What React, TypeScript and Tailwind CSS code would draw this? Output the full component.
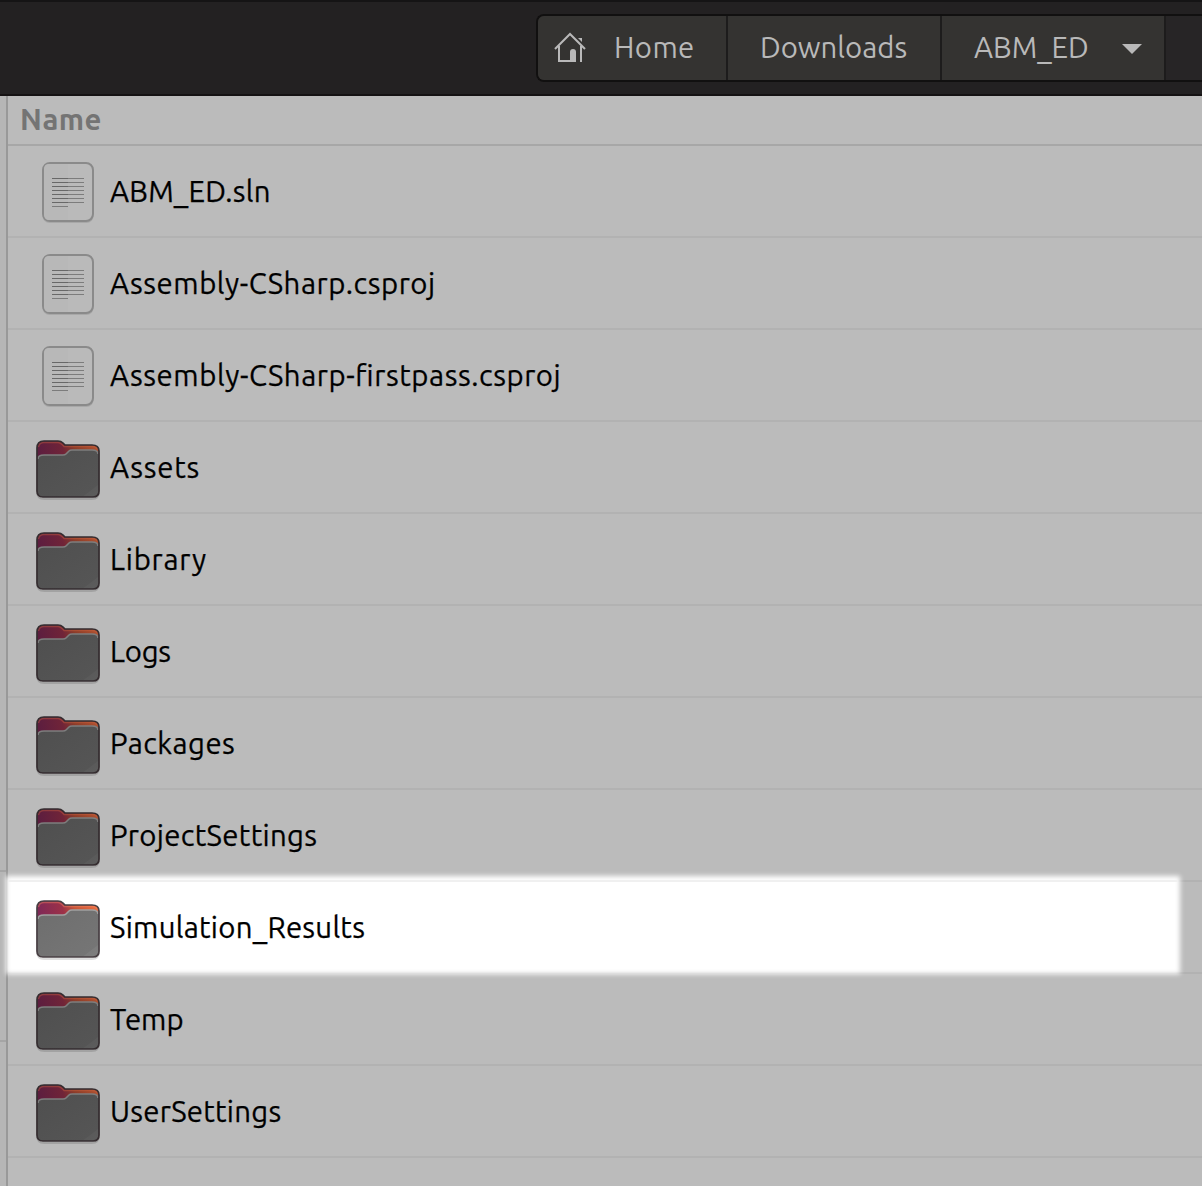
import React from "react";

type Entry = { name: string; kind: "file" | "folder"; fit: string; highlighted?: boolean };

const entries: Entry[] = [
  { name: "ABM_ED.sln", kind: "file", fit: "tracking-[0.22px]" },
  { name: "Assembly-CSharp.csproj", kind: "file", fit: "tracking-[0.55px]" },
  { name: "Assembly-CSharp-firstpass.csproj", kind: "file", fit: "tracking-[0.57px]" },
  { name: "Assets", kind: "folder", fit: "tracking-[0.8px]" },
  { name: "Library", kind: "folder", fit: "tracking-[0.8px]" },
  { name: "Logs", kind: "folder", fit: "tracking-[-0.2px]" },
  { name: "Packages", kind: "folder", fit: "tracking-[0.45px]" },
  { name: "ProjectSettings", kind: "folder", fit: "tracking-[0.33px]" },
  { name: "Simulation_Results", kind: "folder", fit: "tracking-[0.28px]", highlighted: true },
  { name: "Temp", kind: "folder", fit: "tracking-[0px]" },
  { name: "UserSettings", kind: "folder", fit: "tracking-[0.27px]" },
];

function FileIcon() {
  return (
    <svg width="64" height="64" viewBox="0 0 64 64" className="mt-[2px] shrink-0">
      <rect x="6.5" y="4" width="51" height="59" rx="7" fill="#a8a8a8" />
      <rect x="7" y="3" width="50" height="58" rx="7" fill="#bababa" stroke="#8a8a8a" strokeWidth="2" />
      <path d="M8 54V9q0-5 5-5h19v56H13q-5 0-5-6" fill="#b8b8b8" />
      {[18, 22, 26, 30, 34, 38, 42].map((y) => (
        <g key={y}>
          <rect x="16" y={y} width="16" height="1" fill="#686868" />
          <rect x="32" y={y} width="16" height="1" fill="#7c7c7c" />
        </g>
      ))}
      <rect x="16" y="46" width="16" height="1" fill="#7c7c7c" />
    </svg>
  );
}

function FolderIcon({ bright = false }: { bright?: boolean }) {
  const id = bright ? "bright" : "dim";
  return (
    <svg width="64" height="64" viewBox="0 0 64 64" className="mt-[6px] shrink-0">
      <defs>
        <linearGradient id={id + "-back"} gradientUnits="userSpaceOnUse" x1="0" x2="64" y1="16" y2="4">
          <stop offset="0" stopColor={bright ? "#7c2858" : "#5a1d40"} />
          <stop offset="0.42" stopColor={bright ? "#9c3148" : "#702438"} />
          <stop offset="0.6" stopColor={bright ? "#c85538" : "#8c3c29"} />
          <stop offset="1" stopColor={bright ? "#ee7040" : "#b45330"} />
        </linearGradient>
        <linearGradient id={id + "-front"} x1="0" x2="1" y1="0" y2="1">
          <stop offset="0" stopColor={bright ? "#6e6e6e" : "#4f4f4f"} />
          <stop offset="0.86" stopColor={bright ? "#757575" : "#555555"} />
          <stop offset="0.87" stopColor={bright ? "#7c7c7c" : "#5a5a5a"} />
          <stop offset="1" stopColor={bright ? "#7f7f7f" : "#5d5d5d"} />
        </linearGradient>
      </defs>
      <path d="M1 15v38q0 8 7 8h48q7 0 7-8V15" fill="none" stroke="#000" strokeOpacity=".13" strokeWidth="2" />
      <path d="M1 10Q1 3 8 3h14q3 0 5 2l2 2h27q7 0 7 6v40q0 6-6 6H7q-6 0-6-6Z" fill={"url(#" + id + "-back)"} />
      <path d="M2.500 9Q3 4.500 8 4.500h14q2 0 4 2l2 2h28q4.500 0 5.500 3" fill="none" stroke={bright ? "#ff8965" : "#d06540"} strokeOpacity=".4" strokeWidth="1.500" />
      <path d="M1 21q0-4 6-4h20q2 0 3-1l3-3q1-1 3-1h21q6 0 6 5v36q0 6-6 6H7q-6 0-6-6Z" fill={"url(#" + id + "-front)"} />
      <path d="M2 21q0-4 6-4h19q2 0 3-1l3-3q1-1 3-1h20q6 0 6 4" fill="none" stroke={bright ? "#a0a0a0" : "#7d7d7d"} strokeWidth="1.600" />
      <path d="M1 10Q1 3 8 3h14q3 0 5 2l2 2h27q7 0 7 6v40q0 6-6 6H7q-6 0-6-6Z" fill="none" stroke={bright ? "#483f43" : "#352d30"} strokeWidth="1.700" />
    </svg>
  );
}

function HomeIcon() {
  return (
    <svg width="32" height="32" viewBox="0 0 32 32" className="shrink-0" fill="none" stroke="#b9b9b9" strokeWidth="2">
      <path d="M1 17 16 2l15 15" />
      <path d="M5 14v15h17M27 14v16" />
      <path d="M16 30V20q0-3 3-3t3 3v10Z" fill="#b9b9b9" stroke="none" />
      <path d="M24 6h4v4Z" fill="#b9b9b9" stroke="none" />
    </svg>
  );
}

export default function App() {
  return (
    <div className="flex h-[1186px] w-[1202px] flex-col overflow-hidden bg-[#bbbbbb] font-['Ubuntu','Noto_Sans',sans-serif] text-[29.333px] leading-none [font-feature-settings:'liga'_1]">
      <header className="flex h-24 shrink-0 justify-end border-y-2 border-t-[#151415] border-b-[#151213] bg-[#232122] pt-3">
        <nav className="flex h-[68px] w-[666px] overflow-hidden rounded-l-lg border-y-2 border-l-2 border-[#111010] bg-[#272526] text-[#b9b9b9]">
          <div className="flex w-[190px] shrink-0 items-center border-r-2 border-[#1d1c1c] bg-[#343331] pl-4">
            <HomeIcon />
            <span className="ml-[28px] tracking-[0.4px]">Home</span>
          </div>
          <div className="flex w-[214px] shrink-0 items-center border-r-2 border-[#1d1c1c] bg-[#343331] pl-[32px]">
            <span>Downloads</span>
          </div>
          <div className="flex w-[224px] shrink-0 items-center justify-between border-r-2 border-[#1d1c1c] bg-[#343331] pr-[22px] pl-8">
            <span>ABM_ED</span>
            <svg width="20" height="10" viewBox="0 0 20 10" className="mt-[2px]"><path d="M0 0h20L10 10Z" fill="#b9b9b9" /></svg>
          </div>
        </nav>
      </header>
      <main className="flex min-h-0 grow">
        <aside className="flex w-2 shrink-0 flex-col border-r-2 border-[#999999] bg-[#b6b6b6]">
          <div className="h-[776px] border-b-2 border-[#a5a5a5]" />
          <div className="h-[170px] border-b-2 border-[#a5a5a5]" />
        </aside>
        <section className="flex grow flex-col">
          <div className="flex h-[50px] shrink-0 items-center border-b-2 border-[#a7a7a7] pl-3 font-bold text-[#747474]">
            <span className="tracking-[0.5px]">Name</span>
          </div>
          {entries.map((e) => (
            <div key={e.name} className="relative flex h-[92px] shrink-0 items-center border-b-2 border-[#b2b2b2] pl-7 text-black">
              {e.highlighted && (
                <>
                  <div className="absolute -top-[6px] right-[22px] -bottom-[2px] -left-[2px] bg-white blur-[2.5px]" />
                  <div className="absolute -top-[2px] right-[24px] left-0 h-[2px] bg-[#f0f0f0]" />
                </>
              )}
              <div className="relative flex h-16 items-center gap-[10px]">
                {e.kind === "file" ? <FileIcon /> : <FolderIcon bright={e.highlighted} />}
                <span className={"pt-[2px] [-webkit-text-stroke:0.25px_black] " + e.fit}>{e.name}</span>
              </div>
            </div>
          ))}
        </section>
      </main>
    </div>
  );
}
